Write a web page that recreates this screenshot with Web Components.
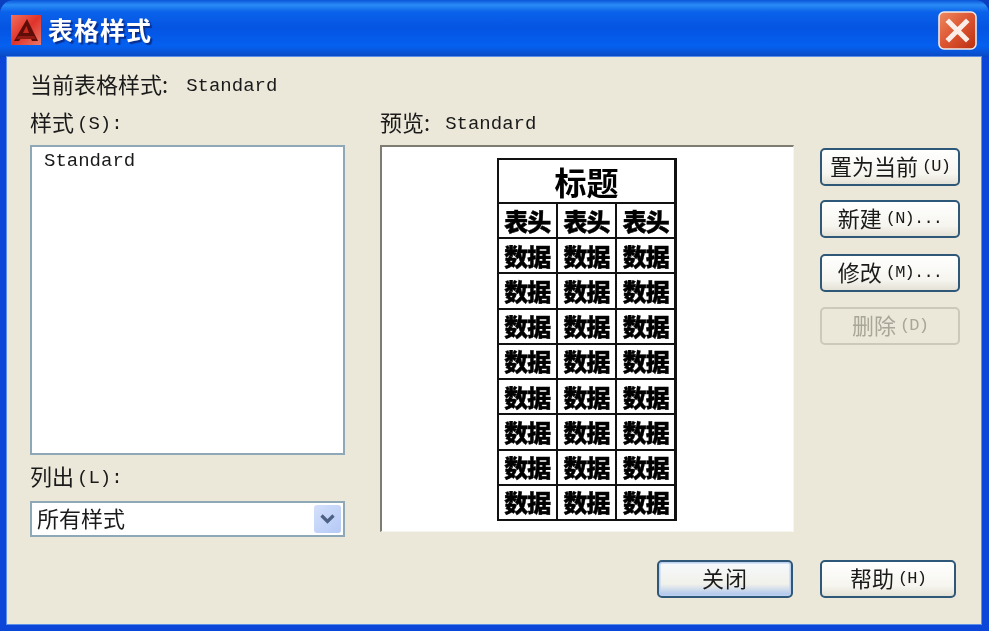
<!DOCTYPE html>
<html lang="zh-CN">
<head>
<meta charset="utf-8">
<title>表格样式</title>
<style>
  html, body { margin: 0; padding: 0; background: #0a3fc0; }
  body { width: 989px; height: 631px; overflow: hidden; }
</style>
</head>
<body>
<xp-dialog heading="表格样式">
  <div style="display:flex;flex-direction:column">
    <xp-label text="当前表格样式:" mono="Standard" gap="18" style="margin-bottom:12px"></xp-label>
    <div style="display:grid;grid-template-columns:315px 414px 140px;column-gap:35px">
      <div style="display:flex;flex-direction:column">
        <xp-label text="样式" mono="(S):" gap="3" style="margin-bottom:11px"></xp-label>
        <xp-listbox style="height:310px">Standard</xp-listbox>
        <xp-label text="列出" mono="(L):" gap="3" style="margin:7px 0 13px"></xp-label>
        <xp-combo>所有样式</xp-combo>
      </div>
      <div style="display:flex;flex-direction:column">
        <xp-label text="预览:" mono="Standard" gap="15" style="margin-bottom:11px"></xp-label>
        <table-preview></table-preview>
      </div>
      <div style="display:flex;flex-direction:column;gap:15px;padding-top:40px;margin-left:-9px">
        <xp-button mono="(U)" style="margin-bottom:-1px">置为当前</xp-button>
        <xp-button mono="(N)..." style="margin-bottom:1px">新建</xp-button>
        <xp-button mono="(M)...">修改</xp-button>
        <xp-button mono="(D)" disabled>删除</xp-button>
      </div>
    </div>
    <div style="display:flex;justify-content:flex-end;gap:27px;margin-right:25px;padding-top:23px">
      <xp-button wide default>关闭</xp-button>
      <xp-button wide mono="(H)">帮助</xp-button>
    </div>
  </div>
</xp-dialog>

<script>
const CJK = '"Noto Sans CJK SC", "Liberation Sans", sans-serif';
const MONO = '"Liberation Mono", "Noto Sans CJK SC", monospace';

class XpDialog extends HTMLElement {
  connectedCallback() {
    this.attachShadow({ mode: 'open' });
    this.shadowRoot.innerHTML = `
      <style>
        :host {
          display: flex;
          flex-direction: column;
          width: 989px;
          height: 631px;
          box-sizing: border-box;
          font-family: ${CJK};
          color: #111;
          filter: blur(.35px);
          background: #0b46d8;
          border-radius: 14px 14px 0 0;
        }
        .title {
          height: 57px;
          flex: none;
          display: flex;
          align-items: center;
          box-sizing: border-box;
          padding: 3px 12px 0 11px;
          border-radius: 14px 14px 0 0;
          background: linear-gradient(to bottom, #0a56d8 0, #2a8cf6 5px, #0a62ea 12px, #0554e2 28px, #0560f0 46px, #0a50d0 54px, #0a46c0 57px);
        }
        .title svg.logo { width: 30px; height: 30px; flex: none; }
        .title span {
          margin: -2px 0 0 7px;
          font-size: 25px;
          font-weight: 700;
          letter-spacing: 1px;
          color: #fff;
          text-shadow: 2px 2px 1px #0a2f90;
          flex: 1;
        }
        .close { width: 39px; height: 39px; flex: none; display: block; }
        .client {
          flex: 1;
          margin: 0 8px 7px 7px;
          box-sizing: border-box;
          min-height: 0;
          padding: 13px 0 26px 23px;
          background: #ebe8d9;
          box-shadow: 0 0 0 1px #5d8fe8;
        }
      </style>
      <div class="title">
        <svg class="logo" viewBox="0 0 30 30">
          <defs>
            <linearGradient id="r" x1="0" y1="0" x2="1" y2="1">
              <stop offset="0" stop-color="#f0705e"/><stop offset=".5" stop-color="#e0332a"/><stop offset="1" stop-color="#e8786a"/>
            </linearGradient>
          </defs>
          <rect width="30" height="30" fill="url(#r)"/>
          <path d="M16 4 L27 26 L21 26 L19 22 H11 L8 26 H3 Z" fill="#5e0d08"/>
          <path d="M15.500 11 L18 18 H12 Z" fill="#c92a20"/>
          <path d="M7 21 H23 L25 24 H5 Z" fill="#8f1a12"/>
        </svg>
        <span>${this.getAttribute('heading')}</span>
        <svg class="close" viewBox="0 0 39 39">
          <defs><linearGradient id="c" x1="0" y1="0" x2="1" y2="1">
            <stop offset="0" stop-color="#ee8a62"/><stop offset=".5" stop-color="#dc5430"/><stop offset="1" stop-color="#b8300f"/>
          </linearGradient></defs>
          <rect x="1" y="1" width="37" height="37" rx="5" fill="url(#c)" stroke="#f2e9e4" stroke-width="1.6"/>
          <path d="M11 11 L28 28 M28 11 L11 28" stroke="#fbeee8" stroke-width="5" stroke-linecap="square"/>
        </svg>
      </div>
      <div class="client"><slot></slot></div>`;
  }
}

class XpLabel extends HTMLElement {
  connectedCallback() {
    this.attachShadow({ mode: 'open' });
    this.shadowRoot.innerHTML = `
      <style>
        :host { display: block; height: 26px; line-height: 26px; font-size: 22px; white-space: nowrap; color: #1a1a1a; }
        b { font-weight: 400; font-family: ${MONO}; font-size: 19px; vertical-align: 2px; }
      </style>
      ${this.getAttribute('text')}<b style="margin-left:${this.getAttribute('gap')}px">${this.getAttribute('mono')}</b>`;
  }
}

class XpListbox extends HTMLElement {
  connectedCallback() {
    this.attachShadow({ mode: 'open' });
    this.shadowRoot.innerHTML = `
      <style>
        :host {
          display: block;
          box-sizing: border-box;
          background: #fff;
          border: 2px solid #8fa8b8;
          padding: 2px 12px;
          font: 19px/24px ${MONO};
          color: #1a1a1a;
        }
      </style>
      <slot></slot>`;
  }
}

class XpCombo extends HTMLElement {
  connectedCallback() {
    this.attachShadow({ mode: 'open' });
    this.shadowRoot.innerHTML = `
      <style>
        :host {
          display: flex;
          align-items: center;
          justify-content: space-between;
          box-sizing: border-box;
          height: 36px;
          background: #fff;
          border: 2px solid #8fa8b8;
          padding: 0 2px 0 5px;
          font-size: 22px;
          color: #1a1a1a;
        }
        .text { margin-top: -4px; }
        .arrow {
          width: 27px;
          height: 28px;
          border-radius: 3px;
          background: linear-gradient(135deg, #d4e0fb, #b4c9f6);
          display: flex;
          align-items: center;
          justify-content: center;
        }
        svg { width: 17px; height: 12px; }
      </style>
      <span class="text"><slot></slot></span>
      <div class="arrow"><svg viewBox="0 0 17 12"><path d="M2.500 2.500 L8.500 8.500 L14.500 2.500" fill="none" stroke="#4d6185" stroke-width="3.200"/></svg></div>`;
  }
}

class XpButton extends HTMLElement {
  connectedCallback() {
    this.attachShadow({ mode: 'open' });
    const mono = this.getAttribute('mono');
    this.shadowRoot.innerHTML = `
      <style>
        :host {
          display: flex;
          align-items: center;
          justify-content: center;
          box-sizing: border-box;
          width: 140px;
          height: 38px;
          padding-bottom: 5px;
          border: 2px solid #2f5878;
          border-radius: 5px;
          background: linear-gradient(to bottom, #ffffff 0, #f6f5ef 70%, #e4e1d6 100%);
          font-size: 22px;
          color: #1a1a1a;
          white-space: nowrap;
        }
        :host([wide]) { width: 136px; }
        :host([default]) {
          letter-spacing: 1px;
          box-shadow: inset 0 0 0 1.500px #bcd0ef;
          background: linear-gradient(to bottom, #f6f9fd 0, #f1f1ea 65%, #a9c2ee 100%);
        }
        :host([disabled]) {
          border-color: #ccc9ba;
          background: #ebe8d9;
          color: #a8a698;
        }
        b { font-weight: 400; font-family: ${MONO}; font-size: 17px; margin: 3px 0 0 4px; letter-spacing: -.8px; }
      </style>
      <slot></slot>${mono ? `<b>${mono}</b>` : ''}`;
  }
}

class TablePreview extends HTMLElement {
  connectedCallback() {
    this.attachShadow({ mode: 'open' });
    const cols = w => `<span>${w}</span>`.repeat(3);
    this.shadowRoot.innerHTML = `
      <style>
        :host {
          display: flex;
          justify-content: center;
          box-sizing: border-box;
          height: 387px;
          background: #fff;
          border-top: 2px solid #7f7d72;
          border-left: 2px solid #7f7d72;
          border-right: 1px solid #f6f5ee;
          border-bottom: 1px solid #f6f5ee;
          padding-top: 11px;
          padding-right: 2px;
        }
        .table {
          width: 180px;
          height: 363px;
          box-sizing: border-box;
          border: 2px solid #111;
          display: grid;
          grid-template-columns: repeat(3, 1fr);
          grid-template-rows: 42px repeat(9, 1fr);
          gap: 2px;
          background: #111;
          font-weight: 900;
          color: #000;
          font-size: 24px;
        }
        .table span {
          background: #fff;
          display: flex;
          align-items: center;
          justify-content: center;
          line-height: 1;
          letter-spacing: -1px;
          -webkit-text-stroke: .4px #000;
        }
        .table .head { grid-column: 1 / -1; font-size: 32px; font-weight: 700; letter-spacing: 0; -webkit-text-stroke: 0; }
      </style>
      <div class="table">
        <span class="head">标题</span>
        ${cols('表头')}
        ${cols('数据').repeat(8)}
      </div>`;
  }
}

customElements.define('xp-dialog', XpDialog);
customElements.define('xp-label', XpLabel);
customElements.define('xp-listbox', XpListbox);
customElements.define('xp-combo', XpCombo);
customElements.define('xp-button', XpButton);
customElements.define('table-preview', TablePreview);
</script>
</body>
</html>
